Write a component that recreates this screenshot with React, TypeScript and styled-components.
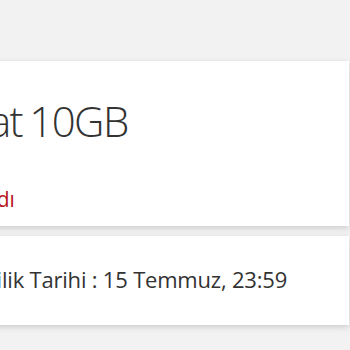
import React from "react";
import styled, { createGlobalStyle } from "styled-components";

const Global = createGlobalStyle`
  html, body { margin: 0; padding: 0; background: #f2f2f2; overflow: hidden; }
  body { font-family: "Open Sans", "Noto Sans", sans-serif; }
`;

const Page = styled.div`
  width: 350px;
  height: 350px;
  overflow: hidden;
  background: #f2f2f2;
`;

const Stack = styled.div`
  display: flex;
  flex-direction: column;
  gap: 10px;
  padding-top: 61px;
  margin-left: -300px;
  width: 649px;
`;

const Card = styled.section<{ $h: number }>`
  background: #ffffff;
  height: ${(p) => p.$h}px;
  box-sizing: border-box;
  box-shadow: 0 2px 6px rgba(0, 0, 0, 0.16);
  display: flex;
  flex-direction: column;
  align-items: flex-start;
`;

const Title = styled.div<{ $shift: number }>`
  margin: 39px 0 0 ${(p) => p.$shift}px;
  font-size: 42px;
  line-height: 1;
  font-weight: 300;
  letter-spacing: -1.6px;
  word-spacing: -2px;
  color: #333333;
  white-space: nowrap;
`;

const Status = styled.div<{ $shift: number }>`
  margin: 47px 0 0 ${(p) => p.$shift}px;
  font-size: 21px;
  line-height: 1;
  color: #b8121b;
  white-space: nowrap;
`;

const DateLine = styled.div<{ $shift: number }>`
  margin: 32px 0 0 ${(p) => p.$shift}px;
  font-size: 22px;
  line-height: 1;
  letter-spacing: -0.2px;
  color: #333333;
  white-space: nowrap;
`;

export default function App() {
  return (
    <Page>
      <Global />
      <Stack>
        <Card $h={165}>
          <Title $shift={247}>Saat 10GB</Title>
          <Status $shift={206}>Tanımlandı</Status>
        </Card>
        <Card $h={89}>
          <DateLine $shift={232}>Geçerlilik Tarihi : 15 Temmuz, 23:59</DateLine>
        </Card>
      </Stack>
    </Page>
  );
}
